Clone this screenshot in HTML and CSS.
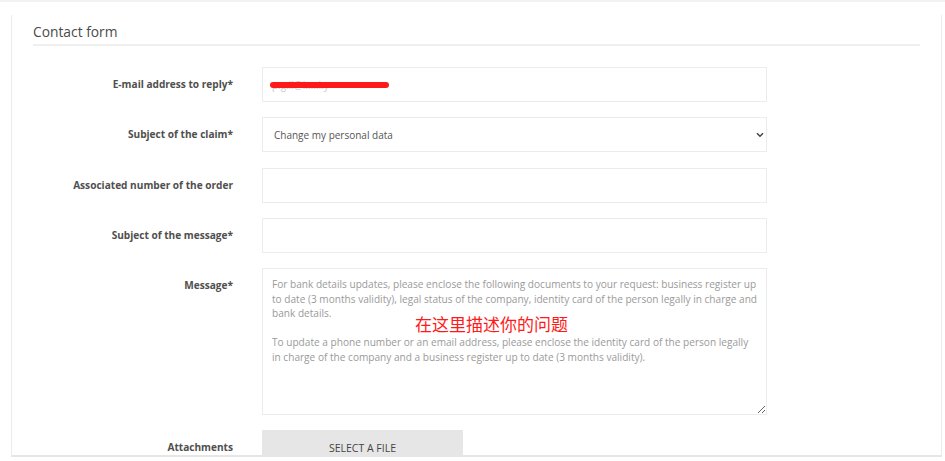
FILE: index.html
```html
<!DOCTYPE html>
<html lang="en">
<head>
<meta charset="utf-8">
<title>Contact form</title>
<link rel="stylesheet" href="styles.css">
</head>
<body>
<div class="topline"></div>
<div class="card">
  <h2 class="title">Contact form</h2>
  <form class="form">
    <label class="label" for="email">E-mail address to reply*</label>
    <div class="field">
      <input class="input faint" id="email" type="text" value="p.g.li@l.....l.y">
      <span class="scribble"></span>
    </div>

    <label class="label" for="claim">Subject of the claim*</label>
    <div class="field">
      <select class="input select" id="claim">
        <option>Change my personal data</option>
      </select>
      <svg class="chev" width="8" height="6" viewBox="0 0 8 6"><path d="M1 1.2l3 3 3-3" fill="none" stroke="#444" stroke-width="1.5"/></svg>
    </div>

    <label class="label" for="order">Associated number of the order</label>
    <div class="field"><input class="input" id="order" type="text"></div>

    <label class="label" for="subject">Subject of the message*</label>
    <div class="field"><input class="input" id="subject" type="text"></div>

    <label class="label" for="msg">Message*</label>
    <div class="field">
      <textarea class="input area" id="msg" placeholder="For bank details updates, please enclose the following documents to your request: business register up to date (3 months validity), legal status of the company, identity card of the person legally in charge and bank details.&#10;&#10;To update a phone number or an email address, please enclose the identity card of the person legally in charge of the company and a business register up to date (3 months validity)."></textarea>
      <span class="note">在这里描述你的问题</span>
    </div>

    <span class="label">Attachments</span>
    <div class="field"><button type="button" class="filebtn">SELECT A FILE</button></div>
  </form>
</div>
</body>
</html>
```
FILE: styles.css
```css
html, body {
  margin: 0;
  padding: 0;
  background: #fff;
  font-family: "Open Sans", "Noto Sans CJK SC", sans-serif;
  color: #555;
}
.topline {
  height: 2px;
  background: #f3f3f3;
}
.card {
  margin: 13px 3px 0 11px;
  height: 442px;
  overflow: hidden;
  box-sizing: border-box;
  border: 1px solid #ececec;
  border-top: none;
  border-bottom: 2px solid #e6e6e6;
  padding: 7px 21px 0 21px;
}
.title {
  margin: 0 0 21px 0;
  font-size: 13.8px;
  font-weight: 400;
  line-height: 20px;
  padding-bottom: 2px;
  border-bottom: 2px solid #efefef;
  color: #4a4a4a;
}
.form {
  display: grid;
  grid-template-columns: 200px 505px;
  column-gap: 29px;
  row-gap: 15.25px;
}
.label {
  text-align: right;
  font-weight: 700;
  font-size: 10.1px;
  line-height: 35px;
  color: #4f4f4f;
  align-self: start;
}
.field {
  position: relative;
}
.input {
  display: block;
  box-sizing: border-box;
  width: 505px;
  height: 35px;
  margin: 0;
  border: 1px solid #ececec;
  background: #fff;
  font-family: "Open Sans", sans-serif;
  font-size: 10px;
  color: #555;
  padding: 0 11px;
  outline: none;
}
.faint { color: #c8c8c8; padding-left: 9px; }
.select {
  appearance: none;
  -webkit-appearance: none;
  border-radius: 0;
}
.chev {
  position: absolute;
  right: 3px;
  top: 15px;
}
.area {
  height: 147px;
  resize: vertical;
  padding: 8px 7px 8px 9px;
  line-height: 14.5px;
  font-size: 10.1px;
}
.area::placeholder {
  color: #9a9a9a;
  opacity: 1;
}
.scribble {
  position: absolute;
  left: 8px;
  top: 14.5px;
  width: 119px;
  height: 6.5px;
  border-radius: 3px;
  background: #ff1a1a;
}
.note {
  position: absolute;
  left: 153px;
  top: 44px;
  font-family: "Noto Sans CJK SC", sans-serif;
  font-size: 17px;
  color: #ff1a1a;
  line-height: 24px;
}
.filebtn {
  display: block;
  width: 201px;
  height: 35px;
  border: none;
  background: #e6e6e6;
  font-family: "Open Sans", sans-serif;
  font-size: 10.5px;
  color: #444;
  padding: 0;
}
```
